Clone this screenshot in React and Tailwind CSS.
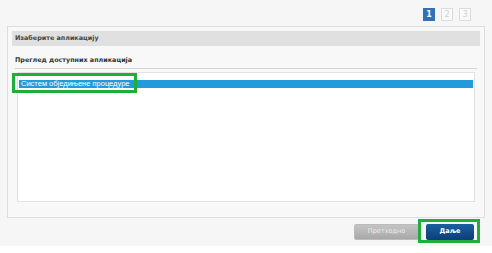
export default function App() {
  return (
    <div className="w-[492px] h-[253px] bg-white" style={{ fontFamily: '"DejaVu Sans", Verdana, sans-serif' }}>
      <div className="h-[246px] bg-[#f6f6f6] pt-[8px] px-[7px]">
        <div className="flex justify-end gap-[6px] pr-[14px] h-[13px]">
          <div className="w-[12px] h-[13px] bg-[#2f73b5] text-white text-[8px] font-bold flex items-center justify-center">1</div>
          <div className="w-[12px] h-[13px] border border-[#dcdcdc] bg-[#fafafa] text-[#d0d0d0] text-[8px] flex items-center justify-center">2</div>
          <div className="w-[12px] h-[13px] border border-[#dcdcdc] bg-[#fafafa] text-[#d0d0d0] text-[8px] flex items-center justify-center">3</div>
        </div>
        <div className="mt-[5px] h-[192px] border border-[#dedede] bg-[#f8f8f8] px-[4px] pt-[4px]">
          <div className="h-[15px] bg-[#e0e0e0] flex items-center pl-[3px] text-[6.4px] font-bold text-[#444]">Изаберите апликацију</div>
          <div className="mt-[10px] mx-[3px] border-b border-[#d4d4d4] pb-[2px] text-[6.4px] font-bold text-[#333]">Преглед доступних апликација</div>
          <div className="mt-[3px] mx-[5px] h-[130px] border border-[#e2e2e2] bg-white p-[1px] relative">
            <div className="mt-[6px] h-[8px] bg-[#239ad9] text-white text-[7.5px] leading-[8px] pl-[2px]" style={{ fontFamily: '"Liberation Sans", Arial, sans-serif' }}>Систем обједињене процедуре</div>
            <div className="absolute left-[-6px] top-[0px] w-[125px] h-[20px] border-[3px] border-[#1fae3c]"></div>
          </div>
        </div>
        <div className="mt-[6px] flex justify-end gap-[7px] pr-[11px] relative">
          <div className="w-[65px] h-[16px] rounded-[2px] bg-gradient-to-b from-[#c4c4c4] to-[#a8a8a8] border border-[#bbb] text-[#eee] text-[6.5px] flex items-center justify-center">Претходно</div>
          <div className="w-[48px] h-[16px] rounded-[2px] bg-gradient-to-b from-[#1b5fa0] to-[#0b3f78] text-white text-[6.5px] font-bold flex items-center justify-center">Даље</div>
          <div className="absolute right-[5px] top-[-5px] w-[62px] h-[24px] border-[3px] border-[#1fae3c]"></div>
        </div>
      </div>
    </div>
  );
}
